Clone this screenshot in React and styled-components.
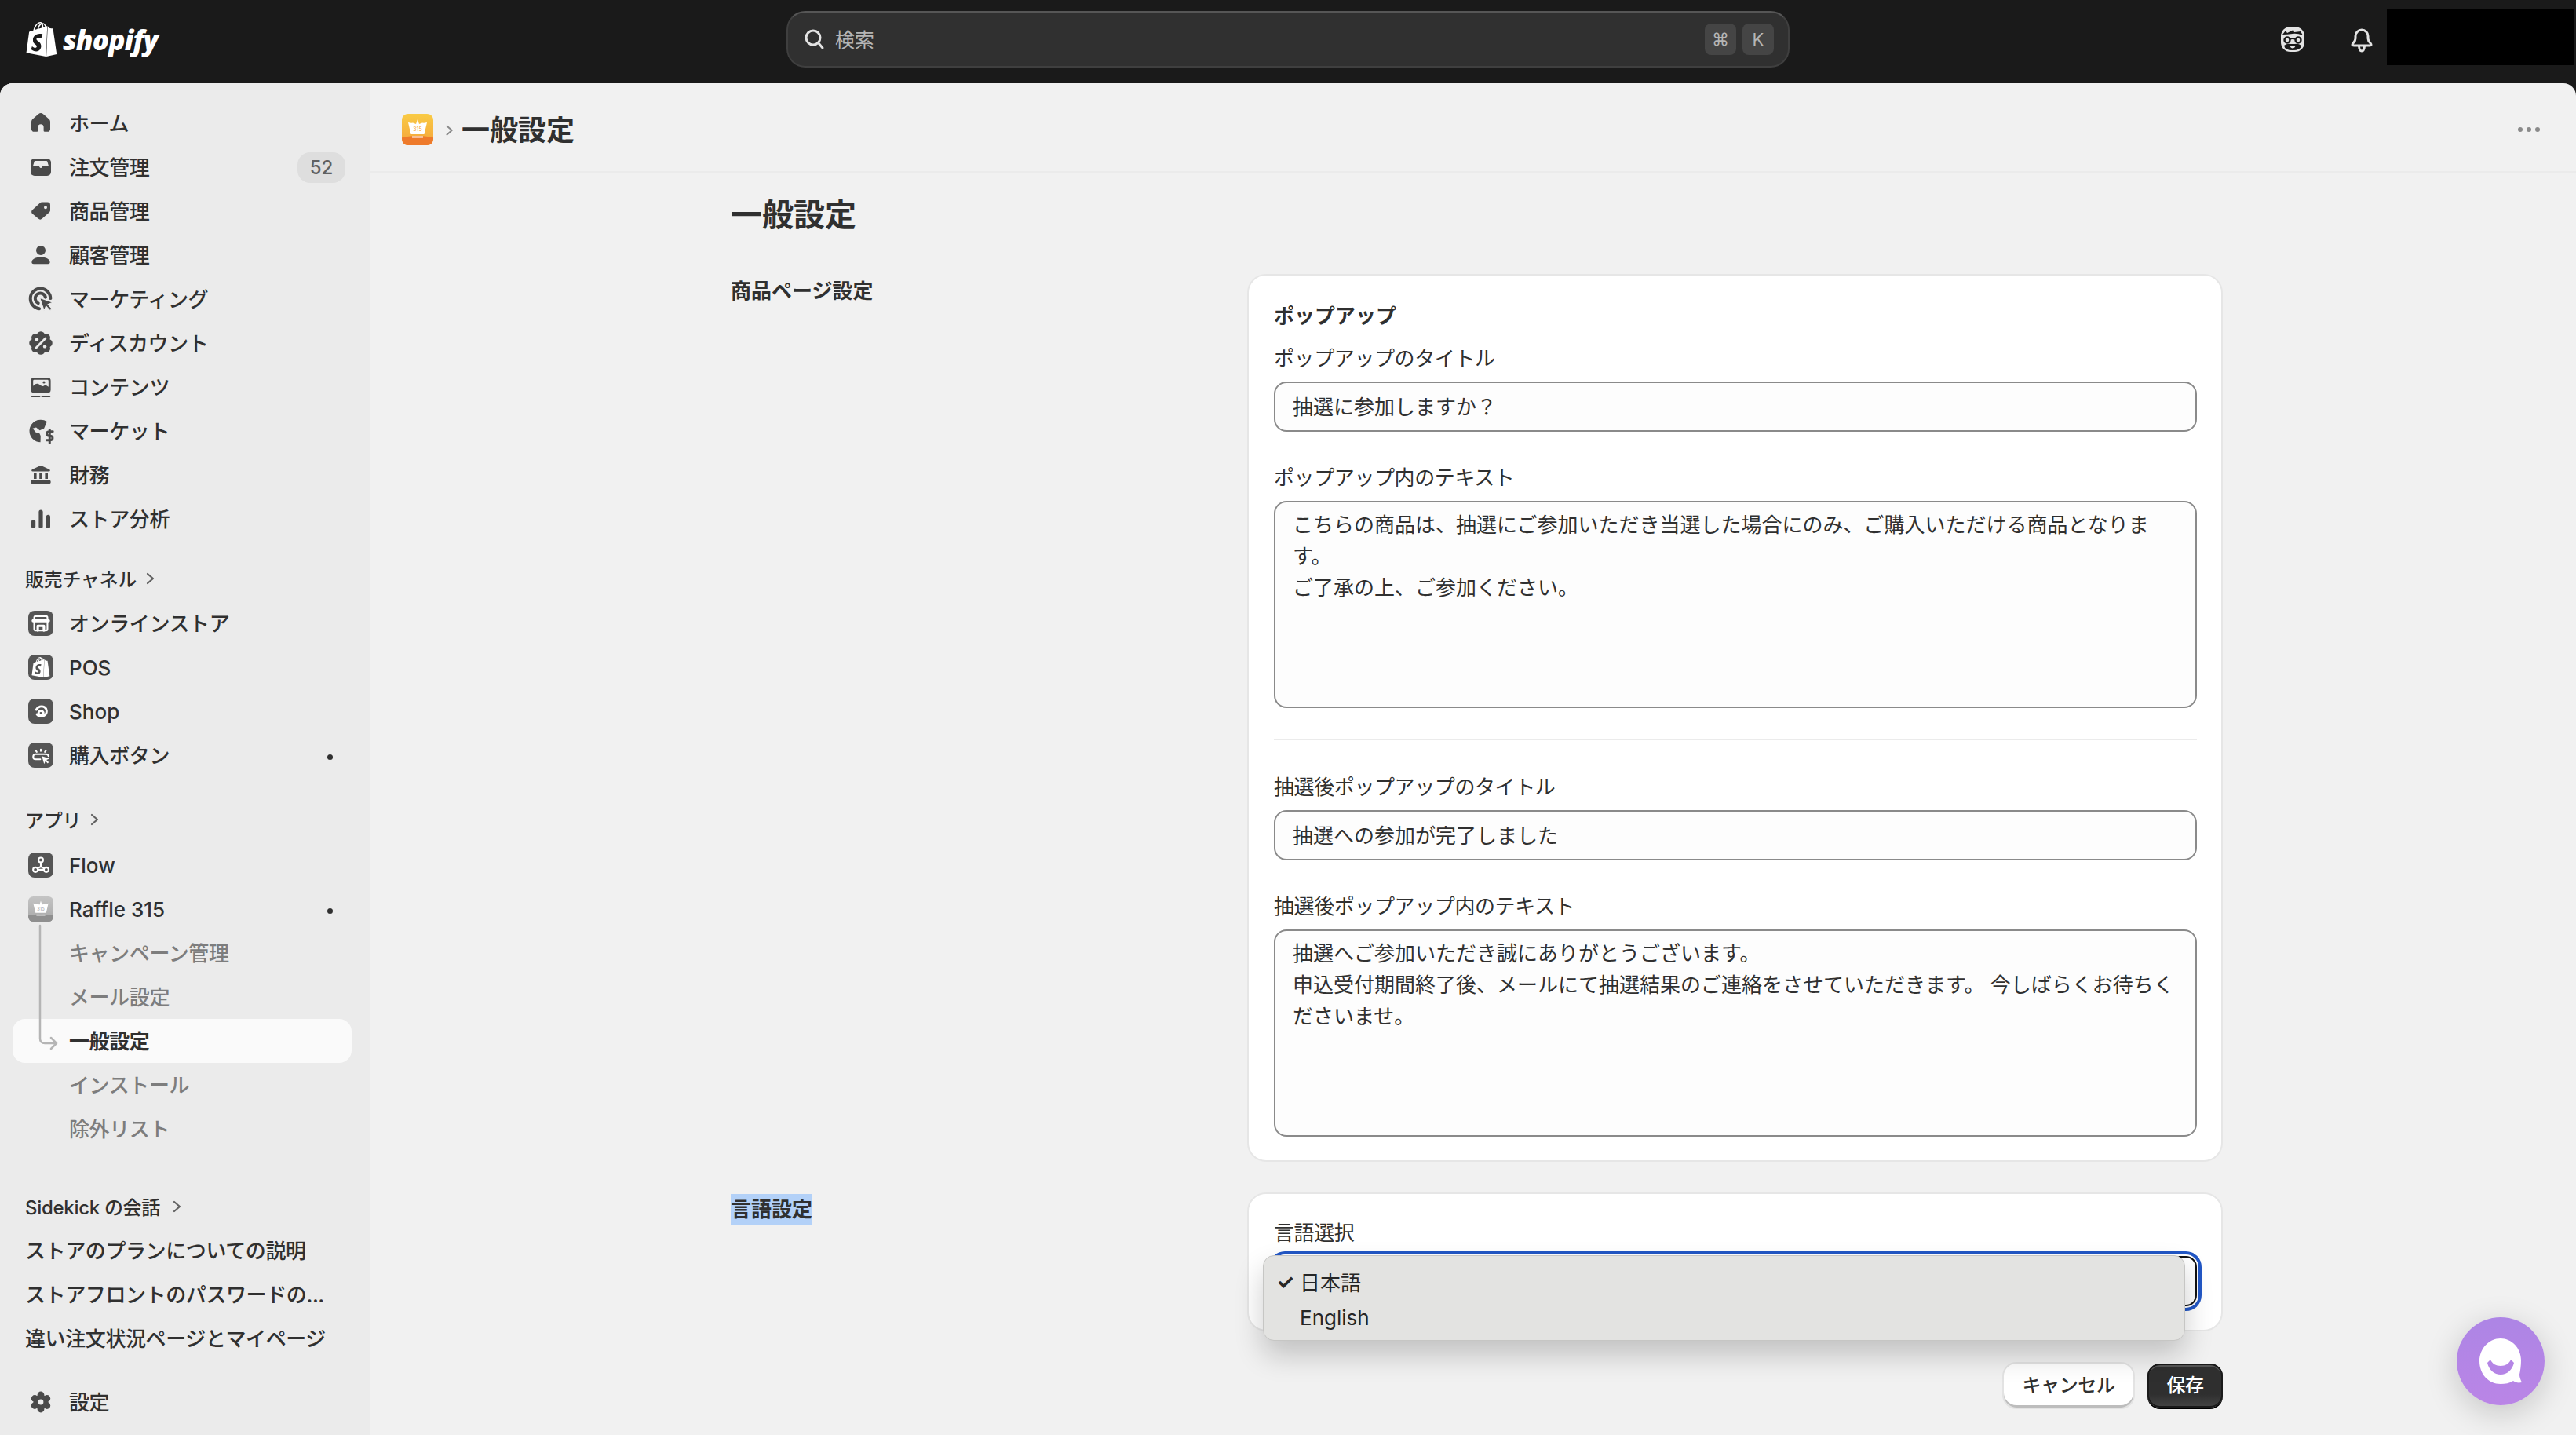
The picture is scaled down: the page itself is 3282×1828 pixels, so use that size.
import React from 'react';
import styled, { createGlobalStyle } from 'styled-components';
import { SiShopify } from 'react-icons/si';

const FONT = `Inter, "Noto Sans CJK JP", "Noto Sans", sans-serif`;
const INK = '#303030';
const ICON = '#4a4a4a';
const SIDE = '#ebebeb';

const GlobalStyle = createGlobalStyle`
  html, body {
    margin: 0;
    height: 100%;
    overflow: hidden;
    background: #1a1a1a;
  }
  body {
    font-family: ${FONT};
    font-size: 26px;
    color: ${INK};
  }
  * { box-sizing: border-box; }
`;

const TopBar = styled.header`
  display: grid;
  grid-template-columns: 1fr 1278px 1fr;
  align-items: center;
  height: 106px;
  padding-bottom: 6px;
  background: #1a1a1a;
`;

const Logo = styled.div`
  display: flex;
  align-items: center;
  gap: 5px;
  padding-left: 31px;
  color: #fff;
`;

const LogoText = styled.span`
  font-family: "Open Sans", sans-serif;
  font-style: italic;
  font-weight: 800;
  font-size: 35px;
  letter-spacing: -0.8px;
`;

const Search = styled.div`
  display: flex;
  align-items: center;
  height: 72px;
  padding: 0 18px 0 18px;
  border: 2px solid #3f3f3f;
  border-top-color: #565656;
  border-radius: 24px;
  background: #303030;
  color: #b5b5b5;
  font-size: 25px;
`;

const SearchText = styled.span`
  margin-left: 12px;
  padding-bottom: 2px;
  flex: 1;
`;

const Kbd = styled.kbd`
  display: flex;
  align-items: center;
  justify-content: center;
  width: 40px;
  height: 40px;
  margin-left: 8px;
  border-radius: 8px;
  background: #454545;
  color: #b5b5b5;
  font-family: ${FONT};
  font-size: 22px;
`;

const TopRight = styled.div`
  display: flex;
  align-items: center;
  justify-content: flex-end;
  padding-right: 2px;
`;

const TopIcon = styled.span`
  display: flex;
  align-items: center;
  justify-content: center;
  width: 56px;
  height: 56px;
  margin-right: ${p => p.$gap || 0}px;
`;

const Redacted = styled.div`
  width: 239px;
  height: 72px;
  margin-top: -6px;
  background: #000;
`;

const Frame = styled.div`
  display: flex;
  height: calc(100vh - 106px);
  border-radius: 16px 16px 0 0;
  overflow: hidden;
  background: #f1f1f1;
`;

const Sidebar = styled.nav`
  flex: 0 0 472px;
  padding-top: 23px;
  background: ${SIDE};
`;

const NavItem = styled.a`
  display: flex;
  align-items: center;
  height: 56px;
  margin: 0 24px 0 16px;
  padding-left: 16px;
  border-radius: 16px;
  color: ${p => (p.$sub && !p.$active ? '#7d7d7d' : INK)};
  background: ${p => (p.$active ? '#fafafa' : 'transparent')};
  font-weight: ${p => (p.$active ? 700 : 500)};
  white-space: nowrap;
`;

const NavIcon = styled.span`
  display: flex;
  align-items: center;
  justify-content: center;
  flex: 0 0 40px;
  min-width: 0;
  height: 40px;
  margin-right: 16px;

  svg {
    flex: none;
  }
`;

const NavLabel = styled.span`
  padding-bottom: ${p => (p.$latin ? 0 : 3)}px;
  letter-spacing: ${p => (p.$latin ? 0 : -0.4)}px;
`;

const NavIndent = styled.span`
  flex: 0 0 56px;
`;

const Count = styled.span`
  margin-left: auto;
  margin-right: 8px;
  width: 61px;
  height: 39px;
  border-radius: 16px;
  background: #dedede;
  color: #616161;
  font-size: 24px;
  line-height: 39px;
  text-align: center;
`;

const Dot = styled.i`
  width: 7px;
  height: 7px;
  margin: 4px 24px 0 auto;
  border-radius: 50%;
  background: ${INK};
`;

const SectionLabel = styled.div`
  display: flex;
  align-items: center;
  gap: ${p => p.$gap || 8}px;
  height: 56px;
  margin-top: ${p => p.$top}px;
  margin-bottom: ${p => p.$bottom || 0}px;
  padding: 0 0 3px 32px;
  font-size: 24px;
  font-weight: 500;
  letter-spacing: -0.3px;
`;

const Chat = styled.div`
  height: 56px;
  margin-left: 32px;
  line-height: 56px;
  font-weight: 500;
  letter-spacing: -0.4px;
  white-space: nowrap;
`;

const SubTree = styled.div`
  position: relative;
`;

const TreeLine = styled.svg`
  position: absolute;
  left: 48px;
  top: 0;
  width: 30px;
  height: 160px;
  overflow: visible;
  z-index: 1;
`;

const SettingsRow = styled.div`
  margin-top: 24px;
`;

const Main = styled.main`
  flex: 1;
  min-width: 0;
`;

const PageHeader = styled.div`
  display: flex;
  align-items: center;
  height: 114px;
  padding: 6px 46px 0 40px;
  border-bottom: 2px solid #ebebeb;
`;

const Crumb = styled.span`
  display: flex;
  margin: 2px 6px 0 12px;
  color: #8a8a8a;
`;

const HeaderTitle = styled.h1`
  margin: -4px 0 0;
  font-size: 36px;
  font-weight: 700;
`;

const Dots = styled.span`
  display: flex;
  gap: 5px;
  margin-left: auto;
`;

const DotGrey = styled.i`
  width: 6px;
  height: 6px;
  border-radius: 50%;
  background: #8a8a8a;
`;

const Content = styled.div`
  width: 1901px;
  margin-left: 459px;
  padding-top: 26px;
`;

const PageTitle = styled.h2`
  margin: 0 0 47px;
  font-size: 40px;
  line-height: 56px;
  font-weight: 700;
`;

const Section = styled.section`
  display: grid;
  grid-template-columns: 658px 1243px;
  margin-bottom: ${p => p.$gap || 0}px;
`;

const SectionTitle = styled.div`
  padding-top: 2px;
  font-weight: 700;
  line-height: 40px;
`;

const Selected = styled.span`
  display: inline-block;
  background: #b3d1f8;
`;

const Card = styled.div`
  padding: 30px 31px 30px 32px;
  border: 2px solid #e6e6e6;
  border-radius: 24px;
  background: #fff;
`;

const CardTitle = styled.div`
  margin-bottom: 14px;
  padding-top: 2px;
  font-weight: 700;
  line-height: 40px;
`;

const Field = styled.label`
  display: block;
  margin-top: ${p => p.$top || 0}px;
`;

const FieldLabel = styled.div`
  margin-bottom: 9px;
  line-height: 40px;
  letter-spacing: -0.4px;
`;

const TextInput = styled.input`
  display: block;
  width: 100%;
  height: 64px;
  padding: 0 22px 4px;
  border: 2px solid #8a8a8a;
  border-radius: 16px;
  background: #fdfdfd;
  color: ${INK};
  font-family: ${FONT};
  font-size: 26px;
  outline: none;
`;

const TextArea = styled.textarea`
  display: block;
  width: 100%;
  height: 264px;
  padding: 9px 23px 9px 22px;
  border: 2px solid #8a8a8a;
  border-radius: 16px;
  background: #fdfdfd;
  color: ${INK};
  font-family: ${FONT};
  font-size: 26px;
  line-height: 40px;
  overflow: hidden;
  resize: none;
  outline: none;
`;

const Divider = styled.hr`
  height: 2px;
  margin: 39px 0 40px;
  border: 0;
  background: #ebebeb;
`;

const SelectBox = styled.div`
  position: relative;
  height: 64px;
  border: 2px solid #111;
  border-radius: 14px;
  background: #fff;
  box-shadow: 0 0 0 2px #fff, 0 0 0 6px #2257c5;
`;

const Menu = styled.ul`
  position: absolute;
  left: -16px;
  top: -3px;
  width: 1175px;
  height: 109px;
  margin: 0;
  padding: 12px 0 9px;
  list-style: none;
  border: 1px solid #c6c6c4;
  border-radius: 14px;
  background: #e3e3e1;
  box-shadow: 0 18px 36px rgba(0, 0, 0, 0.2);
  z-index: 2;
`;

const MenuItem = styled.li`
  display: flex;
  align-items: center;
  height: 44px;
  padding: 0 0 ${p => p.$bottom || 0}px 16px;
  color: #262626;
`;

const Check = styled.span`
  flex: 0 0 30px;
  font-size: 26px;
  font-weight: 700;
`;

const Actions = styled.div`
  display: flex;
  justify-content: flex-end;
  gap: 18px;
  margin-top: 41px;
`;

const Button = styled.button`
  height: 56px;
  width: ${p => p.$width}px;
  padding: 0 0 5px;
  border: 0;
  border-radius: 16px;
  font-family: ${FONT};
  font-size: 24px;
  font-weight: 500;
  letter-spacing: -0.4px;
  color: ${p => (p.$primary ? '#fff' : INK)};
  background: ${p => (p.$primary ? 'linear-gradient(#2f2f2f 70%, #454545)' : '#fff')};
  box-shadow: ${p => (p.$primary
    ? 'inset 0 0 0 2px #1a1a1a, inset 0 4px 0 #555, 0 2px 0 #000'
    : '0 0 0 2px #e3e3e3, inset 0 -3px 0 #bdbdbd')};
`;

const ChatBubble = styled.div`
  position: fixed;
  left: 3130px;
  top: 1678px;
  width: 112px;
  height: 112px;
  display: flex;
  align-items: center;
  justify-content: center;
  border-radius: 50%;
  background: linear-gradient(#ad85e5, #ba85e6);
  box-shadow: 0 10px 40px rgba(0, 0, 0, 0.18);
`;

const Svg = ({ children, size = 40 }) => (
  <svg width={size} height={size} viewBox="0 0 20 20" fill={ICON}>
    {children}
  </svg>
);

const lobes = (n, r, size) =>
  Array.from({ length: n }, (_, i) => {
    const a = (i / n) * Math.PI * 2 + Math.PI / 2;
    return <circle key={i} cx={10 + r * Math.cos(a)} cy={10 + r * Math.sin(a)} r={size} />;
  });

const HomeIcon = () => (
  <Svg>
    <path d="M8.500 4.100a2.300 2.300 0 0 1 3 0l3.600 3.100c.6.5.9 1.200.9 1.900v4.600c0 1-.8 1.700-1.700 1.700h-1.800a.7.7 0 0 1-.7-.7v-2.300a1.800 1.800 0 0 0-3.600 0v2.300a.7.7 0 0 1-.7.7H5.700c-.9 0-1.700-.7-1.700-1.700V9.100c0-.7.3-1.400.9-1.900z" />
  </Svg>
);
const OrdersIcon = () => (
  <Svg>
    <rect x="3.500" y="4.500" width="13" height="11" rx="2.500" />
    <path fill={SIDE} d="M5 9.200 5.800 6.500q.1-.5.7-.5h7q.6 0 .7.500l.8 2.700h-3.400q-.5 0-.7.500c-.3.5-.8.8-.9.800s-.6-.3-.9-.8q-.2-.5-.7-.5z" />
  </Svg>
);
const TagIcon = () => (
  <Svg>
    <path fillRule="evenodd" d="M10.700 4.300h3.500A1.800 1.800 0 0 1 16 6.100v3.300c0 .5-.2 1-.6 1.300l-4.600 4.100a1.800 1.800 0 0 1-2.400 0L4.600 11.600a1.500 1.500 0 0 1 0-2.300l4.900-4.500c.3-.3.800-.5 1.200-.5zM13 6.600a1 1 0 1 0 0 2 1 1 0 0 0 0-2z" />
  </Svg>
);
const PersonIcon = () => (
  <Svg>
    <circle cx="10" cy="7" r="3" />
    <path d="M4.200 14.600c0-2.100 2.600-3.300 5.800-3.300s5.800 1.200 5.800 3.300c0 .6-.5 1-1.200 1H5.400c-.7 0-1.200-.4-1.200-1z" />
  </Svg>
);
const TargetIcon = () => (
  <Svg size={46}>
    <g fill="none" stroke={ICON} strokeWidth="1.700" strokeLinecap="round">
      <path d="M9.200 15.300A5.600 5.600 0 1 1 15.400 9.600" />
      <path d="M8.600 12.300A2.900 2.900 0 1 1 12.600 9" />
    </g>
    <path d="M9.400 9.300l7.400 2.500-2.800 1.100 2.200 2.500-1.100 1-2.200-2.500-1.100 2.500z" stroke={SIDE} strokeWidth=".5" />
  </Svg>
);
const DiscountIcon = () => (
  <Svg size={44}>
    {lobes(8, 4.300, 2.400)}
    <circle cx="10" cy="10" r="4.500" />
    <path d="M7.300 12.700l5.400-5.400" stroke={SIDE} strokeWidth="1.300" strokeLinecap="round" />
    <circle cx="7.700" cy="8" r="1" fill={SIDE} />
    <circle cx="12.300" cy="12" r="1" fill={SIDE} />
  </Svg>
);
const ContentIcon = () => (
  <Svg>
    <rect x="3.700" y="4" width="12.600" height="9.700" rx="2" />
    <path fill={SIDE} d="M5.100 9.400c1.500-1.900 3.100-1.900 4.500-.6 1.200 1 2.400.9 3.100-.3l2.200 1.400V6.100q0-.7-.7-.7H5.800q-.7 0-.7.700z" />
    <circle cx="12" cy="7" r=".8" />
    <path d="M4.400 16h4.800M10.800 16h4.800" stroke={ICON} strokeWidth="1.100" strokeLinecap="round" />
  </Svg>
);
const MarketsIcon = () => (
  <Svg size={46}>
    <path d="M10 3.800a6.200 6.200 0 0 1 3.400 1L11.800 8.600 9.400 9.700 7.400 8 5.500 8.600l1.700 2.200 2 .4.700 1.500-.1 3.500A6.200 6.200 0 0 1 10 3.800z" />
    <path d="M3.900 10a6.200 6.200 0 0 1 5-6.100L7.400 6.500 5 6.800z" />
    <path fill="none" stroke={ICON} strokeWidth="1.300" strokeLinecap="round" d="M16.600 10.300h-2.100q-1.200.1-1.200 1.200t1.200 1.200h.8q1.200.1 1.200 1.200t-1.200 1.200h-2.100M14.900 9.300v7.400" />
  </Svg>
);
const BankIcon = () => (
  <Svg>
    <path d="M9.300 4.200a1.600 1.600 0 0 1 1.400 0l4.800 2.300c.7.300.5 1.300-.3 1.300H4.800c-.8 0-1-1-.3-1.300z" />
    <path d="M5.500 8.800h1.800v3.700H5.500zM9.100 8.800h1.800v3.700H9.100zM12.700 8.800h1.800v3.700h-1.800z" />
    <rect x="3.700" y="13.300" width="12.600" height="2.300" rx=".9" />
  </Svg>
);
const ChartIcon = () => (
  <Svg>
    <rect x="4" y="10.500" width="2.600" height="5.500" rx="1.300" />
    <rect x="8.700" y="4.300" width="2.600" height="11.700" rx="1.300" />
    <rect x="13.400" y="7.400" width="2.600" height="8.600" rx="1.300" />
  </Svg>
);
const GearIcon = () => (
  <Svg>
    {lobes(6, 4.500, 2.200)}
    <circle cx="10" cy="10" r="4.700" />
    <circle cx="10" cy="10" r="1.700" fill={SIDE} />
  </Svg>
);

const Tile = styled.span`
  display: flex;
  align-items: center;
  justify-content: center;
  width: 32px;
  height: 32px;
  border-radius: 8px;
  background: #555;
  color: #fff;
`;

const TileSvg = ({ children }) => (
  <svg width="26" height="26" viewBox="0 0 20 20" fill="none" stroke="#fff" strokeWidth="1.600" strokeLinecap="round" strokeLinejoin="round">
    {children}
  </svg>
);

const StoreTile = () => (
  <Tile>
    <TileSvg>
      <path d="M3.500 8V4.500q0-1.500 1.500-1.500h10q1.500 0 1.500 1.500V8M3.500 8v7.500q0 1.500 1.500 1.500h10q1.500 0 1.500-1.500V8" />
      <path d="M2.500 7.500h15" strokeWidth="3" />
      <path d="M7 17v-4.500h6V17" strokeWidth="2.400" />
    </TileSvg>
  </Tile>
);
const PosTile = () => (
  <Tile>
    <SiShopify size={26} />
  </Tile>
);
const ShopTile = () => (
  <Tile>
    <TileSvg>
      <path strokeWidth="2.200" d="M5.500 8.500C7 5.300 11 4.500 13.500 6s3 5.500.7 7.500-6.300 2-8-.5c2 1 5 1.500 6-.3s-1-3.400-2.600-3-2 1.300-1.600 2.300" />
    </TileSvg>
  </Tile>
);
const BuyTile = () => (
  <Tile>
    <TileSvg>
      <path d="M9.500 14H5q-2.500 0-2.500-2.500T5 9h10q2.500 0 2.500 2" />
      <path d="M5 5.500 6 6.800M10 4.500V6M15 5.500 14 6.800" />
      <path fill="#fff" stroke="none" d="M11 11l7.500 2.500-3 1.200 2.300 2.300-1 1-2.300-2.300-1.200 3z" />
    </TileSvg>
  </Tile>
);
const FlowTile = () => (
  <Tile>
    <TileSvg>
      <circle cx="10" cy="5" r="2.300" />
      <circle cx="4.700" cy="14.500" r="2.300" />
      <circle cx="15.300" cy="14.500" r="2.300" />
      <path d="M7 14.500h6M10 7.300V11.500L7 13M10 11.500l3 1.500" />
    </TileSvg>
  </Tile>
);

const CrownMark = ({ size, top, mid, base }) => (
  <svg width={size} height={size} viewBox="0 0 40 40" style={{ borderRadius: size / 5, display: 'block' }}>
    <defs>
      <linearGradient id={`crown${size}`} x1="0" y1="0" x2="0" y2="1">
        <stop offset="0" stopColor={top} />
        <stop offset="1" stopColor={mid} />
      </linearGradient>
    </defs>
    <rect width="40" height="40" fill={`url(#crown${size})`} />
    <ellipse cx="20" cy="40" rx="34" ry="12" fill={base} />
    <path fill="#fff" d="M20 7l2 6 4-1.500 2 .3 4-.8-3.500 15h-17L8 11l4 .8 2-.3 4 1.500z" />
    <rect x="13" y="28.500" width="14" height="2" fill="#fff" />
    <text x="20" y="22" textAnchor="middle" fontSize="7" fill={mid} fontFamily="Inter, sans-serif">315</text>
  </svg>
);

const FaceIcon = () => (
  <svg width="32" height="34" viewBox="0 0 32 34">
    <rect x="1" y="1" width="30" height="32" rx="12" fill="#e3e3e3" />
    <path fill="#1a1a1a" d="M3 11l4-5 2 3 8-4 1 3 8-1 3 5q-8-3-13-2-7 1-13 1zM5 25q4-3 8-2h6q4-1 8 2-1 6-11 6T5 25z" />
    <circle cx="9" cy="18" r="3.500" fill="none" stroke="#1a1a1a" strokeWidth="2.400" />
    <circle cx="23" cy="18" r="3.500" fill="none" stroke="#1a1a1a" strokeWidth="2.400" />
    <path d="M12 17q4-2 8 0" stroke="#1a1a1a" strokeWidth="2" fill="none" />
    <path d="M12.500 25.500h7q-1 3-3.500 3t-3.500-3z" fill="#e3e3e3" />
  </svg>
);

const BellIcon = () => (
  <svg width="30" height="34" viewBox="0 0 30 34" fill="none" stroke="#e3e3e3" strokeWidth="3" strokeLinecap="round" strokeLinejoin="round">
    <path d="M7 13a8 8 0 0 1 16 0v3q0 3 3 6 2.500 3-1 3H5q-3.500 0-1-3 3-3 3-6z" />
    <path d="M11.500 26q.5 6 3.500 6t3.500-6" />
  </svg>
);

const Chevron = ({ color = '#616161', size = 20 }) => (
  <svg width={size} height={size} viewBox="0 0 20 20" fill="none" stroke={color} strokeWidth="2.200" strokeLinecap="round" strokeLinejoin="round">
    <path d="M6 4l7 6-7 6" />
  </svg>
);

const mainNav = [
  ['ホーム', HomeIcon],
  ['注文管理', OrdersIcon, '52'],
  ['商品管理', TagIcon],
  ['顧客管理', PersonIcon],
  ['マーケティング', TargetIcon],
  ['ディスカウント', DiscountIcon],
  ['コンテンツ', ContentIcon],
  ['マーケット', MarketsIcon],
  ['財務', BankIcon],
  ['ストア分析', ChartIcon]
];

const channels = [
  ['オンラインストア', StoreTile],
  ['POS', PosTile],
  ['Shop', ShopTile],
  ['購入ボタン', BuyTile, null, true]
];

const isLatin = label => /^[A-Za-z0-9 ]+$/.test(label);

const renderItem = ([label, Icon, count, dot]) => (
  <NavItem key={label}>
    <NavIcon>
      <Icon />
    </NavIcon>
    <NavLabel $latin={isLatin(label)}>{label}</NavLabel>
    {count && <Count>{count}</Count>}
    {dot && <Dot />}
  </NavItem>
);

const SideNav = () => (
  <Sidebar>
    {mainNav.map(renderItem)}
    <SectionLabel $top={21}>
      販売チャネル
      <Chevron />
    </SectionLabel>
    {channels.map(renderItem)}
    <SectionLabel $top={27} $bottom={1}>
      アプリ
      <Chevron />
    </SectionLabel>
    {renderItem(['Flow', FlowTile])}
    <NavItem>
      <NavIcon>
        <CrownMark size={32} top="#c4c4c4" mid="#a8a8a8" base="#8f8f8f" />
      </NavIcon>
      <NavLabel $latin>Raffle 315</NavLabel>
      <Dot />
    </NavItem>
    <SubTree>
      <TreeLine viewBox="0 0 30 160">
        <path d="M3 -7V137q0 6 6 6H24M17 136l7 7-7 7" fill="none" stroke="#b5b5b5" strokeWidth="2.500" strokeLinecap="round" strokeLinejoin="round" />
      </TreeLine>
      {['キャンペーン管理', 'メール設定', '一般設定', 'インストール', '除外リスト'].map(label => (
        <NavItem key={label} $sub $active={label === '一般設定'}>
          <NavIndent />
          <NavLabel>{label}</NavLabel>
        </NavItem>
      ))}
    </SubTree>
    <SectionLabel $top={44} $gap={12}>
      Sidekick の会話
      <Chevron />
    </SectionLabel>
    <Chat>ストアのプランについての説明</Chat>
    <Chat>ストアフロントのパスワードの...</Chat>
    <Chat>違い注文状況ページとマイページ</Chat>
    <SettingsRow>{renderItem(['設定', GearIcon])}</SettingsRow>
  </Sidebar>
);

const App = () => (
  <>
    <GlobalStyle />
    <TopBar>
      <Logo>
        <SiShopify size={44} />
        <LogoText>shopify</LogoText>
      </Logo>
      <Search>
        <svg width="30" height="30" viewBox="0 0 30 30" fill="none" stroke="#e3e3e3" strokeWidth="3" strokeLinecap="round">
          <circle cx="14" cy="13" r="9" />
          <path d="M21 20l5 6" />
        </svg>
        <SearchText>検索</SearchText>
        <Kbd>⌘</Kbd>
        <Kbd>K</Kbd>
      </Search>
      <TopRight>
        <TopIcon $gap={32}>
          <FaceIcon />
        </TopIcon>
        <TopIcon $gap={4}>
          <BellIcon />
        </TopIcon>
        <Redacted />
      </TopRight>
    </TopBar>
    <Frame>
      <SideNav />
      <Main>
        <PageHeader>
          <CrownMark size={40} top="#f9cb45" mid="#f5a33a" base="#ee7a2b" />
          <Crumb>
            <Chevron color="#8a8a8a" size={18} />
          </Crumb>
          <HeaderTitle>一般設定</HeaderTitle>
          <Dots>
            <DotGrey />
            <DotGrey />
            <DotGrey />
          </Dots>
        </PageHeader>
        <Content>
          <PageTitle>一般設定</PageTitle>
          <Section $gap={39}>
            <SectionTitle>商品ページ設定</SectionTitle>
            <Card>
              <CardTitle>ポップアップ</CardTitle>
              <Field>
                <FieldLabel>ポップアップのタイトル</FieldLabel>
                <TextInput readOnly defaultValue="抽選に参加しますか？" />
              </Field>
              <Field $top={39}>
                <FieldLabel>ポップアップ内のテキスト</FieldLabel>
                <TextArea
                  readOnly
                  defaultValue={'こちらの商品は、抽選にご参加いただき当選した場合にのみ、ご購入いただける商品となります。\nご了承の上、ご参加ください。'}
                />
              </Field>
              <Divider />
              <Field>
                <FieldLabel>抽選後ポップアップのタイトル</FieldLabel>
                <TextInput readOnly defaultValue="抽選への参加が完了しました" />
              </Field>
              <Field $top={39}>
                <FieldLabel>抽選後ポップアップ内のテキスト</FieldLabel>
                <TextArea
                  readOnly
                  defaultValue={'抽選へご参加いただき誠にありがとうございます。\n申込受付期間終了後、メールにて抽選結果のご連絡をさせていただきます。 今しばらくお待ちくださいませ。'}
                />
              </Field>
            </Card>
          </Section>
          <Section>
            <SectionTitle>
              <Selected>言語設定</Selected>
            </SectionTitle>
            <Card>
              <FieldLabel>言語選択</FieldLabel>
              <SelectBox>
                <Menu>
                  <MenuItem $bottom={3}>
                    <Check>✓</Check>
                    日本語
                  </MenuItem>
                  <MenuItem>
                    <Check />
                    English
                  </MenuItem>
                </Menu>
              </SelectBox>
            </Card>
          </Section>
          <Actions>
            <Button $width={165}>キャンセル</Button>
            <Button $primary $width={96}>保存</Button>
          </Actions>
        </Content>
      </Main>
    </Frame>
    <ChatBubble>
      <svg width="62" height="62" viewBox="0 0 62 62">
        <path fill="#fff" d="M31 2c14 0 26 12 26 28 0 7-1 13-2 18 0 3 1 6 3 10-5 1-8 0-11-2-5 3-10 4-16 4C15 60 4 47 4 31S16 2 31 2z" />
        <path fill="#b585e6" d="M14 33l4-4c2 5 7 8 13 8s11-3 13-8l4 4c-2 9-9 15-17 15s-15-6-17-15z" />
      </svg>
    </ChatBubble>
  </>
);

export default App;
